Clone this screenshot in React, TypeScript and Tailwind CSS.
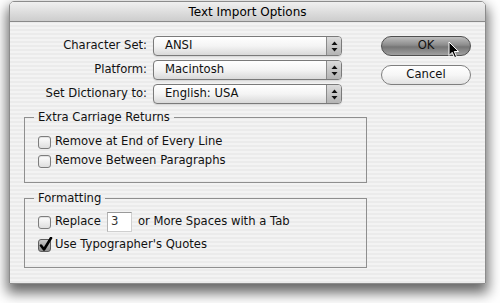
import React from "react";

function Popup({ value }: { value: string }) {
  return (
    <div className="flex h-[20px] w-[189px] rounded-[4px] border border-[#7a7a7a] bg-gradient-to-b from-[#ffffff] via-[#f4f4f4] to-[#d9d9d9] shadow-[0_1px_1px_rgba(0,0,0,0.12)] overflow-hidden">
      <div className="flex-1 flex items-center pl-[11px] leading-none">{value}</div>
      <div className="w-[15px] flex items-center justify-center border-l border-[#8a8a8a] bg-gradient-to-b from-[#dcdcdc] to-[#b4b4b4]">
        <svg width="7" height="11" viewBox="0 0 7 11">
          <path d="M3.5 0.5 L6.5 4 L0.5 4 Z" fill="#111" />
          <path d="M0.5 7 L6.5 7 L3.5 10.5 Z" fill="#111" />
        </svg>
      </div>
    </div>
  );
}

function Checkbox({ checked = false }: { checked?: boolean }) {
  return (
    <span
      className={
        checked
          ? "relative block w-[13px] h-[13px] shrink-0 rounded-[3px] border border-[#5e5e5e] bg-gradient-to-b from-[#c8c8c8] to-[#8f8f8f]"
          : "relative block w-[13px] h-[13px] shrink-0 rounded-[3px] border border-[#7d7d7d] bg-gradient-to-b from-[#ffffff] to-[#dedede] shadow-[inset_0_1px_1px_rgba(0,0,0,0.12)]"
      }
    >
      {checked && (
        <svg className="absolute left-[0px] top-[-3px]" width="14" height="15" viewBox="0 0 14 15">
          <path d="M2 8.5 L5 12.5 L12 1" stroke="#000" strokeWidth="2.6" fill="none" strokeLinecap="round" strokeLinejoin="round" />
        </svg>
      )}
    </span>
  );
}

export default function App() {
  return (
    <div className="w-[500px] h-[303px] bg-white pl-[9px] pt-[1px] font-['DejaVu_Sans',sans-serif] text-[11.6px] text-[#111] overflow-hidden">
      <div className="w-[477px] h-[283px] flex flex-col rounded-t-[5px] border border-[#8c8c8c] shadow-[0_7px_13px_2px_rgba(0,0,0,0.6)] overflow-hidden">
        <div className="h-[20px] shrink-0 flex items-center justify-center bg-gradient-to-b from-[#f0f0f0] to-[#cdcdcd] border-b border-[#8a8a8a] text-[12px] leading-none text-black">
          Text Import Options
        </div>
        <div className="flex-1 flex flex-col pt-[14px] bg-[repeating-linear-gradient(0deg,#ebebeb_0px,#ebebeb_2px,#f3f3f3_2px,#f3f3f3_4px)]">
          <div className="flex">
            <div className="grid grid-cols-[137px_189px] gap-x-[6px] gap-y-[4px] items-center">
              <div className="text-right">Character Set:</div>
              <Popup value="ANSI" />
              <div className="text-right">Platform:</div>
              <Popup value="Macintosh" />
              <div className="text-right">Set Dictionary to:</div>
              <Popup value="English: USA" />
            </div>
            <div className="ml-[39px] flex flex-col gap-[9px]">
              <div className="relative w-[90px] h-[20px] rounded-full border border-[#4f4f4f] bg-[linear-gradient(to_bottom,#bdbdbd_0%,#8c8c8c_45%,#757575_55%,#a0a0a0_100%)] flex items-center justify-center leading-none">
                OK
                <svg className="absolute left-[66px] top-[4px]" width="12" height="18" viewBox="0 0 12 18">
                  <path d="M1 1 L1 14.5 L4.2 11.3 L6.6 16.6 L8.6 15.7 L6.3 10.5 L10.6 10.5 Z" fill="#000" stroke="#fff" strokeWidth="1" strokeLinejoin="round" />
                </svg>
              </div>
              <div className="w-[90px] h-[20px] rounded-full border border-[#7f7f7f] bg-gradient-to-b from-[#ffffff] via-[#f6f6f6] to-[#e2e2e2] flex items-center justify-center leading-none">
                Cancel
              </div>
            </div>
          </div>

          <fieldset className="ml-[14px] mt-[6px] w-[343px] border border-[#8f8f8f] pl-[13px] pt-[10px] pb-[13px]">
            <legend className="px-[4px] -ml-[4px] leading-[14px]">Extra Carriage Returns</legend>
            <div className="flex flex-col gap-[3px]">
              <div className="h-[16px] flex items-center gap-[4px]">
                <Checkbox />
                <span>Remove at End of Every Line</span>
              </div>
              <div className="h-[16px] flex items-center gap-[4px]">
                <Checkbox />
                <span>Remove Between Paragraphs</span>
              </div>
            </div>
          </fieldset>

          <fieldset className="ml-[14px] mt-[8px] w-[343px] border border-[#8f8f8f] pl-[13px] pt-[7px] pb-[14px]">
            <legend className="px-[4px] -ml-[4px] leading-[14px]">Formatting</legend>
            <div className="flex flex-col gap-[5px]">
              <div className="h-[20px] flex items-center">
                <Checkbox />
                <span className="ml-[4px]">Replace</span>
                <div className="ml-[6px] w-[25px] h-[20px] bg-white border border-[#cfcfcf] border-t-[#9a9a9a] border-l-[#b4b4b4] flex items-center pl-[3px] text-[#333]">
                  3
                </div>
                <span className="ml-[6px]">or More Spaces with a Tab</span>
              </div>
              <div className="h-[16px] flex items-center gap-[4px]">
                <Checkbox checked />
                <span>Use Typographer's Quotes</span>
              </div>
            </div>
          </fieldset>
        </div>
      </div>
    </div>
  );
}
